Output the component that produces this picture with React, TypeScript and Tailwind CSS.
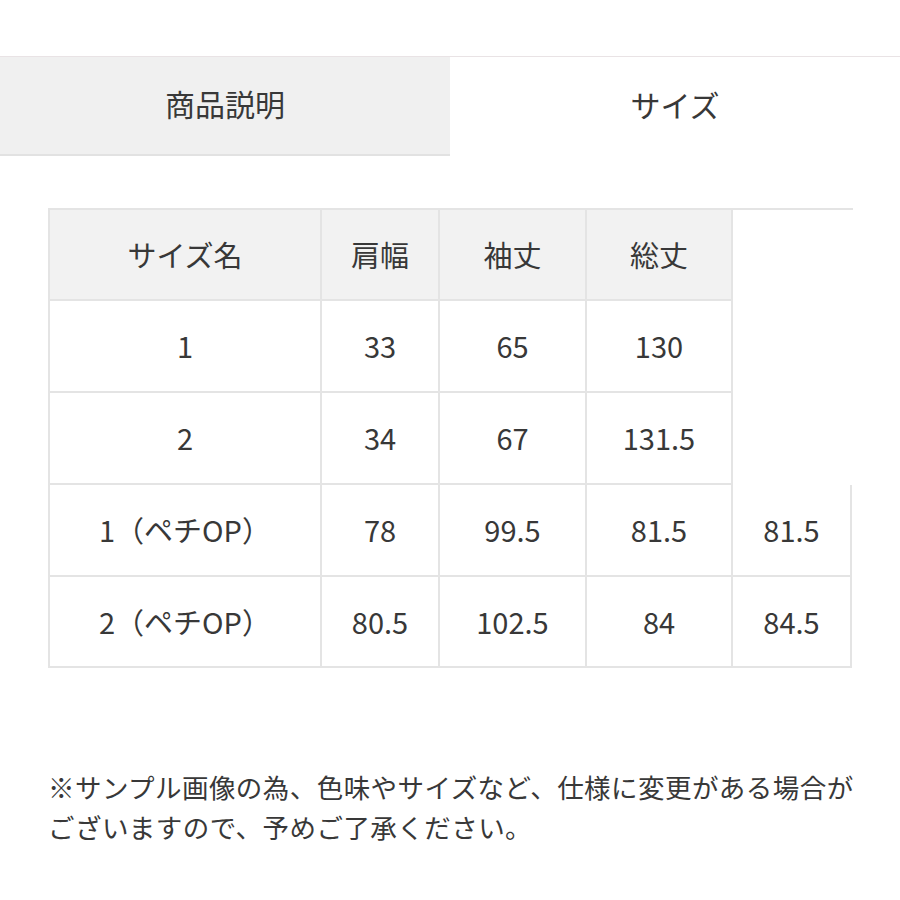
const font = { fontFamily: '"Noto Sans CJK JP", "Noto Sans", sans-serif' };

type Row = { cells: string[]; head?: boolean };

const rows: Row[] = [
  { cells: ['サイズ名', '肩幅', '袖丈', '総丈'], head: true },
  { cells: ['1', '33', '65', '130'] },
  { cells: ['2', '34', '67', '131.5'] },
  { cells: ['1（ペチOP）', '78', '99.5', '81.5', '81.5'] },
  { cells: ['2（ペチOP）', '80.5', '102.5', '84', '84.5'] },
];

const widths = ['w-[274px]', 'w-[118px]', 'w-[147px]', 'w-[146px]', 'w-[119px]'];
const heights = ['h-[91px]', 'h-[92px]', 'h-[92px]', 'h-[92px]', 'h-[91px]'];

export default function App() {
  return (
    <div className="w-[900px] h-[900px] bg-white text-[#383838]" style={font}>
      <div className="h-[56px]" />

      {/* tabs */}
      <div className="flex border-t border-[#e9e3e5]">
        <div className="w-[450px] h-[99px] pb-[4px] bg-[#f0f0f0] border-b-2 border-[#e2e2e2] flex items-center justify-center text-[30px]">
          商品説明
        </div>
        <div className="flex-1 h-[99px] pb-[4px] flex items-center justify-center text-[30px]">
          サイズ
        </div>
      </div>

      {/* size table */}
      <div className="mt-[52px] ml-[48px] w-[805px] border-t-2 border-[#e4e4e4]">
        {rows.map((r, i) => (
          <div key={i} className={`flex ${heights[i]}`}>
            {r.cells.map((c, j) => (
              <div
                key={j}
                className={`${widths[j]} flex items-center justify-center text-[29px] border-r-2 border-b-2 border-[#e4e4e4] ${j === 0 ? 'border-l-2' : ''} ${r.head ? 'bg-[#f2f2f2]' : 'bg-white'}`}
              >
                {c}
              </div>
            ))}
          </div>
        ))}
      </div>

      {/* note */}
      <div className="mt-[99px] ml-[48px] w-[830px] text-[26.5px] leading-[40px] tracking-[0.45px]">
        <p>※サンプル画像の為、色味やサイズなど、仕様に変更がある場合が</p>
        <p>ございますので、予めご了承ください。</p>
      </div>
    </div>
  );
}
